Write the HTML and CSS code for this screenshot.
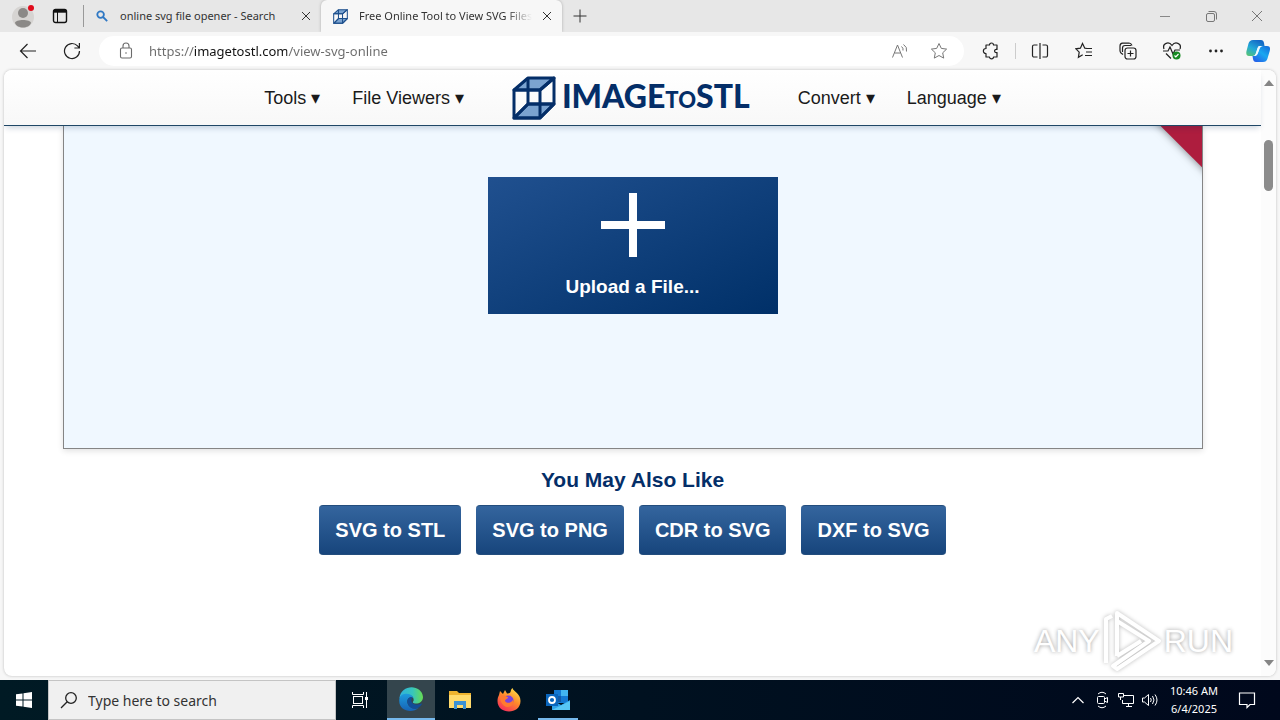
FILE: index.html
```html
<!DOCTYPE html>
<html lang="en">
  <head>
    <title>Free Online Tool to View SVG Files</title>
    <meta charset="utf-8">
    <meta name="viewport" content="width=device-width, initial-scale=1">
    <link rel="stylesheet" href="styles.css">
  </head>
  <body>
    <header id="titlebar">
      <button class="profile" aria-label="Profile">
        <svg width="24" height="28" viewBox="0 0 24 28"><circle cx="12" cy="15" r="11" fill="#d6d4d2"/><circle cx="12" cy="11" r="5" fill="#8b8987"/><path d="M4 21c0-4 16-4 16 0-2 6-14 6-16 0z" fill="#8b8987"/><circle cx="20" cy="6" r="3" fill="#e00b1c"/></svg>
      </button>
      <button class="workspace" aria-label="Tab actions">
        <svg width="16" height="16" viewBox="0 0 16 16" fill="none" stroke="#111"><rect x="1.5" y="1.5" width="13" height="13" rx="2" stroke-width="1.4"/><path d="M2 3.2h12" stroke-width="3"/><path d="M5.5 3v11"/></svg>
      </button>
      <div class="tab">
        <svg width="12" height="12" viewBox="0 0 12 12" fill="none" stroke="#2f78c4" stroke-width="1.8"><circle cx="4.6" cy="4.6" r="3.3"/><path d="M7 7l4.2 4.2"/></svg>
        <span class="tab-title">online svg file opener - Search</span>
        <button class="tab-close" aria-label="Close tab"><svg width="10" height="10" viewBox="0 0 10 10" stroke="#333"><path d="M1 1l8 8M9 1l-8 8"/></svg></button>
      </div>
      <div class="tab tab-active">
        <svg class="favicon" width="15" height="15" viewBox="0 0 44 44"><use href="#cube"/></svg>
        <span class="tab-title tab-fade">Free Online Tool to View SVG Files</span>
        <button class="tab-close" aria-label="Close tab"><svg width="10" height="10" viewBox="0 0 10 10" stroke="#333"><path d="M1 1l8 8M9 1l-8 8"/></svg></button>
      </div>
      <button class="new-tab" aria-label="New tab"><svg width="14" height="14" viewBox="0 0 14 14" stroke="#333"><path d="M7 .5v13M.5 7h13"/></svg></button>
      <div class="window-buttons">
        <button aria-label="Minimize"><svg width="10" height="10" viewBox="0 0 10 10" stroke="#888"><path d="M0 5.5h10"/></svg></button>
        <button aria-label="Restore"><svg width="11" height="11" viewBox="0 0 11 11" fill="none" stroke="#777"><rect x=".5" y="2.5" width="8" height="8" rx="1.5"/><path d="M2.5.5h5.500a2.500 2.500 0 0 1 2.500 2.500v5.500"/></svg></button>
        <button aria-label="Close"><svg width="12" height="12" viewBox="0 0 12 12" stroke="#777"><path d="M1 1l10 10M11 1L1 11"/></svg></button>
      </div>
    </header>
    <nav id="toolbar">
      <button aria-label="Back"><svg width="18" height="16" viewBox="0 0 18 16" fill="none" stroke="#222" stroke-width="1.2"><path d="M17 8H1.500M8.500 1L1.500 8l7 7"/></svg></button>
      <button aria-label="Refresh"><svg width="18" height="18" viewBox="0 0 18 18" fill="none" stroke="#222" stroke-width="1.2"><path d="M16.500 9A7.500 7.500 0 1 1 14.500 3.900L16.200 5.800M16.400 1v5h-5"/></svg></button>
      <div id="address">
        <svg width="14" height="18" viewBox="0 0 14 18" fill="none" stroke="#6b6b6b" stroke-width="1.1"><rect x="1.500" y="6" width="11" height="10" rx="1.500"/><path d="M4 6V4a3 3 0 0 1 6 0v2"/><circle cx="7" cy="11" r=".8" fill="#6b6b6b" stroke="none"/></svg>
        <input type="text" aria-label="Address" value="https://imagetostl.com/view-svg-online">
        <button aria-label="Read aloud"><svg width="18" height="16" viewBox="0 0 18 16" fill="none" stroke="#777"><path d="M1.500 14.500L6.500 2l5 12.500M3.500 10h6M10.500 3.500q2 1.500 1.500 4M12.500 1.500q4 2.500 3 7"/></svg></button>
        <button aria-label="Add to favorites"><svg width="18" height="18" viewBox="0 0 18 18" fill="none" stroke="#777"><path d="M9 1.500l2.300 4.900 5.300.7-3.900 3.700 1 5.300L9 13.500l-4.700 2.600 1-5.300L1.400 7.100l5.300-.7z" stroke-linejoin="round"/></svg></button>
      </div>
      <button aria-label="Extensions"><svg width="18" height="18" viewBox="0 0 18 18" fill="none" stroke="#222" stroke-width="1.200"><path d="M4 3h3.500c0-2.700 4-2.700 4 0H15v4.500c-3.200-.7-3.200 3.700 0 3V15h-3.500c0 2.500-4 2.500-4 0H4v-3.500c-3.500 0-3.500-5 0-5z" stroke-linejoin="round"/></svg></button>
      <span class="divider"></span>
      <button aria-label="Split screen"><svg width="18" height="16" viewBox="0 0 18 16" fill="none" stroke="#222" stroke-width="1.200"><path d="M6.500 2h-3.500a1.500 1.500 0 0 0-1.500 1.500v9A1.500 1.500 0 0 0 3 14h3.500M11.500 2H15a1.500 1.500 0 0 1 1.500 1.500v9A1.500 1.500 0 0 1 15 14h-3.500M9 0v16"/></svg></button>
      <button aria-label="Favorites"><svg width="18" height="18" viewBox="0 0 18 18" fill="none" stroke="#222" stroke-width="1.200"><path d="M12 6.500l-2.200-.3L7.500 1.500 5.400 6.200l-4.500.6 3.300 3.300-.8 5.200 4.300-2.500M10.500 6.500H17M11 10h6M10 13.500h7"/></svg></button>
      <button aria-label="Collections"><svg width="18" height="18" viewBox="0 0 18 18" fill="none" stroke="#222" stroke-width="1.200"><rect x="6" y="6" width="11" height="11" rx="2.500"/><path d="M11.500 8.500v6M8.500 11.500h6M4 12.500L2 11Q1 10 1 8.500V4q0-2.500 2.500-2.800L10 1q2 0 3 2.500M3.500 10V6q0-2.500 2.500-2.500h6"/></svg></button>
      <button aria-label="Browser essentials"><svg width="20" height="18" viewBox="0 0 20 18" fill="none" stroke="#222" stroke-width="1.200"><path d="M2 7C0 1 7-1 10 3.500 13-1 20 1 18 7M1 9h5l2-4 3 7 2-4h5M4 11.500l5 5"/><circle cx="14.500" cy="13.500" r="4" fill="#168a22" stroke="none"/><path d="M12.500 13.500l1.300 1.300 2.700-2.800" stroke="#fff"/></svg></button>
      <button aria-label="Settings and more"><svg width="16" height="4" viewBox="0 0 16 4" fill="#222"><circle cx="2.500" cy="2" r="1.400"/><circle cx="8" cy="2" r="1.400"/><circle cx="13.500" cy="2" r="1.400"/></svg></button>
      <button aria-label="Copilot">
        <svg width="24" height="24" viewBox="0 0 24 24">
          <defs>
            <linearGradient id="cpa" x1="0" y1="1" x2=".6" y2="0"><stop offset="0" stop-color="#5ec76a"/><stop offset=".5" stop-color="#22a9d8"/><stop offset="1" stop-color="#1469c6"/></linearGradient>
            <linearGradient id="cpb" x1="1" y1="0" x2=".2" y2="1"><stop offset="0" stop-color="#1467d8"/><stop offset=".5" stop-color="#1aa8f0"/><stop offset="1" stop-color="#2460e8"/></linearGradient>
          </defs>
          <path d="M7 1h8q2.500 0 3 3l.5 3h-4q-2.500 0-3.200 3l-1.600 5Q9 17 7 17H3q-3.500 0-2.500-5l2-7.500Q3.500 1 7 1z" fill="url(#cpa)"/>
          <path d="M17 7h4q4 0 2.700 5l-2.200 7.500Q20.500 23 17 23H10q-2.500 0-3-3l-.5-3h2q2.500 0 3.300-3l1.400-4Q14 7 17 7z" fill="url(#cpb)"/>
          <path d="M13 7h4q-2.500 0-3.500 3l-1.500 4q-1 3-3 3h-2q2 0 2.800-2.500l1.500-4.500Q12 7 13 7z" fill="#eefaff"/>
        </svg>
      </button>
    </nav>

    <div id="view">
      <div id="site">
        <header id="site-header">
          <a href="#">Tools ▾</a>
          <a href="#">File Viewers ▾</a>
          <a href="#" class="logo">
            <svg width="44" height="44" viewBox="0 0 44 44">
              <g id="cube" stroke="currentColor" stroke-width="3" stroke-linejoin="round">
                <path d="M2 14L16 2h26L28 14zM2 42l14-14h26L28 42z" fill="#7ba3d0"/>
                <path d="M2 14h26v28H2zM28 14L42 2v26L28 42M16 2v26M2 42l14-14h26" fill="none"/>
              </g>
            </svg>
            <span>IMAGE<span class="logo-to">TO</span>STL</span>
          </a>
          <a href="#">Convert ▾</a>
          <a href="#">Language ▾</a>
        </header>
        <main>
          <section id="viewer">
            <span class="ribbon"></span>
            <button class="upload">
              <svg width="64" height="64" viewBox="0 0 64 64" fill="#fff"><path d="M28 0h8v28h28v8H36v28h-8V36H0v-8h28z"/></svg>
              Upload a File...
            </button>
          </section>
          <section id="related">
            <h2>You May Also Like</h2>
            <div class="links">
              <a href="#">SVG to STL</a>
              <a href="#">SVG to PNG</a>
              <a href="#">CDR to SVG</a>
              <a href="#">DXF to SVG</a>
            </div>
          </section>
        </main>
      </div>
      <div id="scrollbar">
        <svg width="10" height="6" viewBox="0 0 10 6" fill="#858585"><path d="M5 0l5 6H0z"/></svg>
        <span class="thumb"></span>
        <svg width="10" height="6" viewBox="0 0 10 6" fill="#858585"><path d="M5 6l5-6H0z"/></svg>
      </div>
      <div id="watermark">
        <span>ANY</span>
        <svg width="58" height="64" viewBox="0 0 58 64" fill="none" stroke="#fff" stroke-width="4" stroke-linejoin="round"><path d="M3 54V10l6-3M14 47V4l42 28-42 28-4-3 36-25L14 12M14 47l24-15"/></svg>
        <span>RUN</span>
      </div>
    </div>

    <footer id="taskbar">
      <button class="task" aria-label="Start"><svg width="16" height="16" viewBox="0 0 16 16" fill="#fff"><path d="M0 2.300L6.500 1.400v6.100H0zM7.500 1.200L16 0v7.500H7.500zM0 8.500h6.500v6.100L0 13.700zM7.500 8.500H16V16l-8.500-1.200z"/></svg></button>
      <label class="search">
        <svg width="18" height="18" viewBox="0 0 18 18" fill="none" stroke="#222" stroke-width="1.300"><circle cx="11" cy="7" r="5.300"/><path d="M7.200 10.800L1 17"/></svg>
        <input type="text" placeholder="Type here to search" aria-label="Type here to search">
      </label>
      <button class="task" aria-label="Task view"><svg width="16" height="16" viewBox="0 0 16 16" fill="none" stroke="#fff"><rect x="1.500" y="4.500" width="9" height="7"/><path d="M.5 0v2.500h11V0M.5 16v-2.500h11V16M14.500 0v16"/><path d="M13 5h3v3h-3z" fill="#fff" stroke="none"/></svg></button>
      <button class="task task-active" aria-label="Edge">
        <svg width="24" height="24" viewBox="0 0 24 24">
          <defs>
            <linearGradient id="ega" x1="0" y1=".5" x2="1" y2=".5"><stop offset="0" stop-color="#2fb2dd"/><stop offset=".55" stop-color="#37c5bd"/><stop offset="1" stop-color="#67dc52"/></linearGradient>
            <linearGradient id="egb" x1="0" y1="0" x2="0" y2="1"><stop offset="0" stop-color="#1d9bdd"/><stop offset="1" stop-color="#1763b5"/></linearGradient>
          </defs>
          <path d="M.5 11C2-3.500 23-3 24 10c0 5-4.500 7-8 6.500-2.500-.3-2.500-1.500-1.500-2.500C16 8 7 5 .5 11z" fill="url(#ega)"/>
          <path d="M.5 11C2 6 12 5 14.500 11c-4-2-7 1-6 5 1 4 6 7 11 5C13 27-2 24 .5 11z" fill="url(#egb)"/>
          <path d="M8.500 16c-1-4 2-6.500 5-5.500-2 2-1.500 5.500 2 6.700 2.500.9 5 .3 7-.7.6 0 .5.700 0 1.300-4 6-12 5-14-1.800z" fill="#124d97"/>
        </svg>
      </button>
      <button class="task" aria-label="File Explorer"><svg width="22" height="20" viewBox="0 0 22 20"><path d="M0 1h8l2 2h12v15H0z" fill="#eeb32f"/><path d="M0 5h22v13H0z" fill="#ffda6c"/><path d="M5 19v-8h12v8h-3v-4H8v4z" fill="#3c91d3"/></svg></button>
      <button class="task" aria-label="Firefox">
        <svg width="24" height="24" viewBox="0 0 24 24">
          <defs><linearGradient id="ffx" x1=".8" y1="0" x2=".2" y2="1"><stop offset="0" stop-color="#ffe14a"/><stop offset=".45" stop-color="#ff8b2b"/><stop offset="1" stop-color="#f5275d"/></linearGradient></defs>
          <path d="M2 7l1-4 3 3 2-4 2 3.500c2 0 3-.5 3.500-1.500.3-2 1-3.200 2-4 1 4 8 5 8 13C23.500 27 .5 27 .5 13c0-2.500.5-4 1.500-6z" fill="url(#ffx)"/>
          <circle cx="11.500" cy="12.500" r="5" fill="#7a43dc"/>
          <path d="M3 8c3-2 6 0 8 1.200 1 1-3 2-3 3.500 1 3 6 3 8-1 2 6-5 9-9 6-3-2-4-6-4-9.700z" fill="#ff7a30"/>
        </svg>
      </button>
      <button class="task task-open" aria-label="Outlook"><svg width="24" height="22" viewBox="0 0 24 22"><path d="M8 1h14v13H8z" fill="#1479d2"/><path d="M15 1h7v6h-7z" fill="#42b5ef"/><path d="M8 7h7v6H8z" fill="#135ba7"/><path d="M6 11l9 5 9-5v10H6z" fill="#2ea3ea"/><path d="M6 21l18-9v9z" fill="#58c7f5"/><path d="M0 5h12v12H0z" fill="#0a66bd"/><circle cx="6" cy="11" r="3" fill="none" stroke="#fff" stroke-width="1.800"/></svg></button>
      <div class="tray">
        <svg width="24" height="12" viewBox="0 0 24 12" fill="none" stroke="#fff" stroke-width="1.200"><path d="M6.500 9L12 3.500 17.500 9"/></svg>
        <svg width="24" height="18" viewBox="0 0 24 18" fill="none" stroke="#fff"><rect x="7.500" y="5.500" width="7" height="7" rx="1"/><path d="M14.500 8l3-1.500v5l-3-1.500M8 3q4-3.500 8 0M8 15q4 3.500 8 0"/></svg>
        <svg width="24" height="16" viewBox="0 0 24 16" fill="none" stroke="#fff"><path d="M10 3.500h9.500v8h-11V8M12 14.500h6M14.500 12v2.500M6.500 8V5M4.500 1.500h5v3.500h-5z"/></svg>
        <svg width="24" height="16" viewBox="0 0 24 16" fill="none" stroke="#fff"><path d="M4.500 6h2l4-3.500v11L6.500 10h-2zM12.500 6q1.500 2 0 4M14.500 4q3 4 0 8M17 2.500q4 5.500 0 11"/></svg>
        <time>10:46 AM<br>6/4/2025</time>
        <svg width="18" height="18" viewBox="0 0 18 18" fill="none" stroke="#fff" stroke-width="1.200"><path d="M1.500 2h15v11.500H12l-3 3v-3H1.500z"/></svg>
      </div>
    </footer>
  </body>
</html>
```
FILE: styles.css
```css
:root {
  --chrome: #e7e7e7;
  --chrome-light: #f7f7f7;
  --navy: #042e68;
  --pale: #f0f8ff;
  --ui: "Noto Sans", "Open Sans", sans-serif;
}
* {
  box-sizing: border-box;
}
body {
  display: flex;
  flex-direction: column;
  min-height: 100vh;
  margin: 0;
  font-family: "Liberation Sans", Arial, sans-serif;
  background-color: var(--chrome-light);
}
button {
  display: flex;
  align-items: center;
  justify-content: center;
  flex: none;
  padding: 0;
  border: 0;
  background: none;
}
svg {
  flex: none;
}
a {
  text-decoration: none;
}
input {
  min-width: 0;
  padding: 0;
  border: 0;
  outline: 0;
  background: none;
  font-family: var(--ui);
}
#titlebar {
  display: flex;
  height: 32px;
  background-color: var(--chrome);
  font-family: var(--ui);
}
.profile {
  width: 46px;
}
.workspace {
  width: 28px;
}
.tab {
  display: flex;
  align-items: center;
  width: 238px;
  padding: 0 8px 0 12px;
  margin-left: 9px;
  border-left: 1px solid #999;
  border-image: linear-gradient(transparent 6px, #999 6px, #999 26px, transparent 26px) 1;
}
.tab-title {
  flex: 1;
  margin-left: 12px;
  overflow: hidden;
  font-size: 11px;
  line-height: 16px;
  white-space: nowrap;
  color: #333;
}
.tab-close {
  width: 14px;
  height: 14px;
  margin-left: 8px;
}
.tab-active {
  width: 241px;
  margin-left: 0;
  border: 0;
  border-radius: 6px 6px 0 0;
  background-color: var(--chrome-light);
  box-shadow: 0 0 3px #aaa;
  clip-path: inset(0 -4px);
}
.tab-active .tab-title {
  margin-left: 11px;
}
.favicon {
  color: #1d4f8c;
}
.tab-fade {
  mask-image: linear-gradient(to right, #000 85%, transparent);
}
.new-tab {
  width: 36px;
}
.window-buttons {
  display: flex;
  margin-left: auto;
}
.window-buttons button {
  width: 46px;
}
#toolbar {
  display: flex;
  align-items: center;
  height: 38px;
  padding: 0 0 0 6px;
}
#toolbar > button {
  width: 44px;
  height: 30px;
}
#toolbar > button:last-child {
  width: 40px;
  margin-right: 2px;
}
#address {
  display: flex;
  flex: 1;
  align-items: center;
  height: 30px;
  margin: 0 5px;
  padding: 0 6px 0 20px;
  border-radius: 15px;
  background-color: #fff;
}
#address input {
  flex: 1;
  margin-left: 16px;
  font-size: 13px;
  line-height: 20px;
  color: transparent;
  background-image: linear-gradient(to right, #6b6b6b 45px, #111 45px, #111 138px, #6b6b6b 138px);
  background-clip: text;
}
#address button {
  width: 39px;
}
.divider {
  width: 1px;
  height: 16px;
  margin: 0 2px;
  background-color: #ccc;
}
#view {
  position: relative;
  display: flex;
  flex: 1;
  margin: 0 4px 4px;
  overflow: hidden;
  border-radius: 8px;
  background-color: #fff;
  box-shadow: 0 0 3px #bbb;
}
#site {
  flex: 1;
}
#site-header {
  position: relative;
  z-index: 1;
  display: flex;
  align-items: center;
  justify-content: center;
  gap: 32px;
  height: 56px;
  border-bottom: 1px solid #1f4766;
  background-image: linear-gradient(#fff, #f8f8f8);
  box-shadow: 0 4px 6px -2px rgba(0, 40, 80, 0.2);
}
#site-header a {
  font-size: 18px;
  line-height: 24px;
  color: #1a1a1a;
}
#site-header .logo {
  display: flex;
  align-items: center;
  gap: 6px;
  margin: 0 16px;
  font-family: Lato, sans-serif;
  font-size: 32px;
  font-weight: 900;
  line-height: 44px;
  color: var(--navy);
}
.logo-to {
  font-size: 22px;
}
#viewer {
  position: relative;
  max-width: 1140px;
  min-height: 323px;
  margin: 0 auto;
  padding: 51px 20px;
  overflow: hidden;
  border: 1px solid #858585;
  border-top: 0;
  background-color: var(--pale);
  box-shadow: 0 2px 6px rgba(0, 0, 0, 0.12);
}
.ribbon {
  position: absolute;
  top: -35px;
  right: -44px;
  width: 120px;
  height: 50px;
  background-color: #ae1d3e;
  box-shadow: 0 0 8px rgba(0, 0, 0, 0.5);
  transform: rotate(45deg);
}
.upload {
  flex-direction: column;
  gap: 18px;
  width: 290px;
  height: 137px;
  margin: 0 auto;
  font-family: inherit;
  font-size: 19px;
  font-weight: bold;
  line-height: 24px;
  color: #fff;
  background-image: linear-gradient(to bottom right, #20508f, #003068);
}
#related {
  padding-top: 19px;
  text-align: center;
}
#related h2 {
  margin: 0 0 13px;
  font-size: 21px;
  line-height: 24px;
  color: var(--navy);
}
.links {
  display: flex;
  justify-content: center;
  gap: 15px;
}
.links a {
  padding: 12px 16px;
  border: 1px solid #234d7d;
  border-width: 1px 0;
  border-radius: 4px;
  font-size: 20px;
  font-weight: bold;
  line-height: 24px;
  color: #fff;
  background-image: linear-gradient(#34659e, #17457c);
}
#scrollbar {
  display: flex;
  flex-direction: column;
  align-items: center;
  width: 15px;
  padding: 10px 0;
  background-color: #fcfcfc;
}
.thumb {
  width: 9px;
  height: 51px;
  margin: 54px 0 auto;
  border-radius: 5px;
  background-color: #8b8b8b;
}
#watermark {
  position: absolute;
  right: 43px;
  bottom: 3px;
  display: flex;
  align-items: center;
  font-size: 32px;
  line-height: 64px;
  color: #fff;
  text-shadow: 0 0 4px #999;
}
#watermark svg {
  margin: 0 3px;
  filter: drop-shadow(0 0 2px #bbb);
}
#taskbar {
  display: flex;
  height: 40px;
  background-image: linear-gradient(to right, #001a24, #00081c);
  font-family: var(--ui);
}
.task {
  width: 48px;
  margin-right: 1px;
}
.task:first-child {
  margin-right: 0;
}
.search {
  display: flex;
  align-items: center;
  width: 288px;
  padding-left: 11px;
  border: 1px solid #c4c4c4;
  background-color: #f0f0f0;
}
.search input {
  flex: 1;
  margin-left: 10px;
  font-size: 14px;
}
.search input::placeholder {
  color: #333;
}
.search + .task {
  margin-right: 3px;
}
.task-active {
  border-bottom: 2px solid #76b9ed;
  background-color: #34454d;
}
.task-open {
  background: linear-gradient(#76b9ed, #76b9ed) center bottom / 40px 2px no-repeat;
}
.tray {
  display: flex;
  align-items: center;
  margin-left: auto;
  padding-right: 24px;
}
.tray time {
  width: 64px;
  margin-right: 12px;
  font-size: 11px;
  line-height: 18px;
  text-align: center;
  color: #fff;
}
```
